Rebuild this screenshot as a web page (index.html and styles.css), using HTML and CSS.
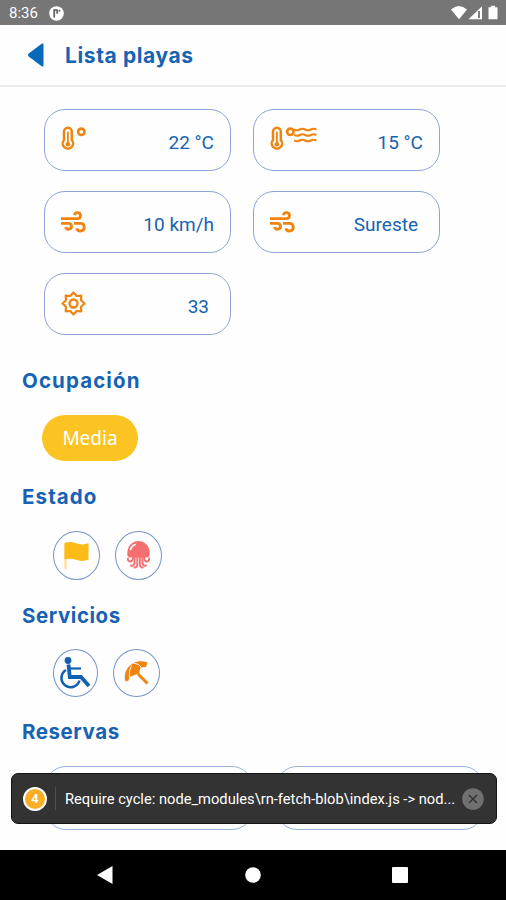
FILE: index.html
```
<!DOCTYPE html>
<html lang="es">
  <head>
    <meta charset="UTF-8" />
    <meta name="viewport" content="width=device-width, initial-scale=1.0" />
    <title>Lista playas</title>
    <link rel="stylesheet" href="styles.css">
  </head>
  <body>
    <svg class="sprite" width="0" height="0">
      <symbol id="thermo" viewBox="0 0 25 26">
        <path d="M3 14V5.600a3.900 3.900 0 0 1 7.800 0V14a5.200 5.200 0 1 1-7.800 0z" fill="none" stroke="currentColor" stroke-width="2.500" />
        <path d="M6.900 6.500v12" stroke="currentColor" stroke-width="1.800" stroke-linecap="round" />
        <circle cx="6.900" cy="18.200" r="2.300" fill="currentColor" />
        <circle cx="20.300" cy="5.800" r="3.200" fill="none" stroke="currentColor" stroke-width="2.600" />
      </symbol>
      <symbol id="wind" viewBox="0 0 25 22">
        <g fill="none" stroke="currentColor" stroke-width="2.900">
          <path d="M0 7.600h16.500a3 3 0 1 0-3-3.400" />
          <path d="M0 12.400h7.500a2.900 2.900 0 1 1-2.800 3.600" />
          <path d="M13 12.400h6.500a3.800 3.800 0 1 1-3.700 4.900" />
        </g>
      </symbol>
    </svg>

    <header class="status">
      <span class="time">8:36</span>
      <svg class="app-dot" width="15" height="15" viewBox="0 0 15 15">
        <circle cx="7.5" cy="7.5" r="7.3" fill="#fff" />
        <path d="M5.200 11.500V4.200h3v3.500" fill="none" stroke="#666" stroke-width="1.800" />
        <circle cx="10.500" cy="4.800" r="1" fill="#666" />
      </svg>
      <svg class="signals" width="48" height="16" viewBox="0 0 48 16">
        <path d="M0 4.5Q8-2.5 16 4.5L8 14.2z" fill="#fff" />
        <path d="M17.5 14.2 31 1.2v13z" fill="#fff" />
        <path d="M28 6v7" stroke="#555" stroke-width="1.5" />
        <path d="M37.5 2.2h2.400V.8h4.200v1.400h2.400v12h-9z" fill="#fff" />
      </svg>
    </header>

    <nav class="topbar">
      <svg class="back" width="16" height="24" viewBox="0 0 16 24">
        <path d="M0 12Q0 11 1 10.3L14 .6Q15.5 0 15.5 1.5v21q0 1.5-1.5.9L1 13.7Q0 13 0 12z" />
      </svg>
      <h1>Lista playas</h1>
    </nav>

    <main>
      <section class="weather">
        <div class="card">
          <svg width="25" height="26"><use href="#thermo" /></svg>
          <span>22 °C</span>
        </div>
        <div class="card">
          <div class="water">
            <svg width="25" height="26"><use href="#thermo" /></svg>
            <svg class="waves" width="23" height="16" viewBox="0 0 23 16">
              <g fill="none" stroke="currentColor" stroke-width="2">
                <path d="M0 2.500q2.800 1.500 5.600 0t5.600 0 5.600 0 5.600 0" />
                <path d="M0 8q2.800 1.500 5.600 0t5.600 0 5.600 0 5.600 0" />
                <path d="M0 13.500q2.800 1.500 5.600 0t5.600 0 5.600 0 5.600 0" />
              </g>
            </svg>
          </div>
          <span>15 °C</span>
        </div>
        <div class="card wind">
          <svg width="25" height="22"><use href="#wind" /></svg>
          <span>10 km/h</span>
        </div>
        <div class="card wind direction">
          <svg width="25" height="22"><use href="#wind" /></svg>
          <span>Sureste</span>
        </div>
        <div class="card uv">
          <svg width="25" height="25" viewBox="0 0 25 25">
            <path d="M12.5 1.5 15.7 5l4.6-.3-.3 4.6 3.5 3.2-3.500 3.200.3 4.600-4.600-.3-3.200 3.500L9.300 20l-4.600.3.3-4.600-3.500-3.200L5 9.300l-.3-4.600 4.600.3z" fill="none" stroke="currentColor" stroke-width="2.200" stroke-linejoin="round" />
            <circle cx="12.500" cy="12.500" r="4" fill="none" stroke="currentColor" stroke-width="2.400" />
          </svg>
          <span>33</span>
        </div>
      </section>

      <section class="occupation">
        <h2 class="wide">Ocupación</h2>
        <span class="pill">Media</span>
      </section>

      <section class="state">
        <h2 class="wide">Estado</h2>
        <div class="circles">
          <div class="circle">
            <svg width="47" height="49" viewBox="0 0 47 49">
              <path d="M12.500 14v24" stroke="#ffdc9c" stroke-width="2.400" />
              <path d="M11.500 12q5-2 11.500.3t12.500 0v16.500q-6 2.200-11.500.2t-12.500-.8z" fill="#fdbb17" />
            </svg>
          </div>
          <div class="circle">
            <svg width="47" height="49" viewBox="0 0 47 49">
              <path d="M12.300 23.500C11.500 5.500 35.500 5.500 34.700 23.500Q34.500 26.500 31 26.500H16Q12.500 26.500 12.300 23.500z" fill="#f46f70" />
              <g fill="none" stroke="#f46f70" stroke-width="1.900" stroke-linecap="round">
                <path d="M18 26q-.5 5-3 4.500t-2-3" />
                <path d="M29 26q.5 5 3 4.500t2-3" />
                <path d="M19.500 26v6q-.5 3.500-3.500 2.500" />
                <path d="M27.500 26v6q.5 3.500 3.500 2.500" />
                <path d="M22.300 26v8q-.3 2.500-2.800 2.500" />
                <path d="M24.900 26v8q.3 2.500 2.800 2.500" />
              </g>
              <path d="M15.500 18.500q1-3.500 4.500-5" fill="none" stroke="#fff" stroke-width="1.600" stroke-linecap="round" />
            </svg>
          </div>
        </div>
      </section>

      <section class="services">
        <h2>Servicios</h2>
        <div class="circles">
          <div class="circle narrow">
            <svg width="45" height="48" viewBox="0 0 45 48">
              <circle cx="15" cy="11.500" r="3.400" fill="#1260b0" />
              <g fill="none" stroke="#1260b0">
                <path d="M15.500 15.500 16.800 28h11.200l8 9" stroke-width="3.800" />
                <path d="M17 19.500h11" stroke-width="2.200" />
                <path d="M13 21a9.200 9.200 0 1 0 13.500 10.500" stroke-width="2.600" />
              </g>
            </svg>
          </div>
          <div class="circle">
            <svg width="47" height="48" viewBox="0 0 47 48">
              <path d="M12.500 32.500C9 20.500 20.500 8.500 34.500 13.500L33 18 27.500 18.500 26 24.500 20.500 26.500 16.500 28 15.500 31.500z" fill="#f08410" />
              <path d="M16.300 28q-.5-6.500 2.200-11.500M20 14q6 .5 8 4" fill="none" stroke="#fff" stroke-width=".9" />
              <path d="m25 25 9.500 9.500" stroke="#f08410" stroke-width="3" />
            </svg>
          </div>
        </div>
      </section>

      <section class="bookings">
        <h2>Reservas</h2>
        <div class="slots">
          <div class="slot"></div>
          <div class="slot"></div>
        </div>
      </section>
    </main>

    <div class="toast">
      <span class="count">4</span>
      <span class="message">Require cycle: node_modules\rn-fetch-blob\index.js -&gt; nod...</span>
      <svg class="close" width="22" height="22" viewBox="0 0 22 22">
        <circle cx="11" cy="11" r="10.800" fill="#707070" />
        <path d="m7 7 8 8M15 7l-8 8" stroke="#303030" stroke-width="1.300" />
      </svg>
    </div>

    <footer class="android-nav">
      <svg width="16" height="18" viewBox="0 0 16 18"><path d="M0 9 15.500 0v18z" /></svg>
      <svg width="16" height="16" viewBox="0 0 16 16"><circle cx="8" cy="8" r="7.800" /></svg>
      <svg width="16" height="16" viewBox="0 0 16 16"><rect width="16" height="16" rx="1" /></svg>
    </footer>
  </body>
</html>
```
FILE: styles.css
```
* {
  box-sizing: border-box;
}
body {
  display: flex;
  flex-direction: column;
  height: 900px;
  margin: 0;
  overflow: hidden;
  position: relative;
  background-color: #fefefe;
  color: #1763b3;
  font-family: Roboto, sans-serif;
}
svg {
  display: block;
  flex: none;
}
.sprite {
  position: absolute;
}
.status {
  display: flex;
  align-items: center;
  height: 25px;
  padding: 1px 7px 0 9px;
  background-color: #767676;
  color: white;
}
.time {
  width: 40px;
  font-size: 15px;
}
.signals {
  margin-left: auto;
}
.topbar {
  display: flex;
  align-items: center;
  height: 62px;
  padding-left: 28px;
  gap: 21px;
  border-bottom: 2px solid #ebebeb;
}
.back {
  fill: #0869ba;
}
h1,
h2 {
  margin: 0;
  font-family: Inter, sans-serif;
  font-weight: 700;
  line-height: 26px;
  white-space: nowrap;
}
h1 {
  padding-top: 2px;
  font-size: 21px;
  letter-spacing: 0.6px;
}
h2 {
  padding-left: 22px;
  font-size: 20.5px;
  letter-spacing: 0.55px;
}
.wide {
  letter-spacing: 1.1px;
}
main {
  height: 763px;
  overflow: hidden;
}
.weather {
  display: grid;
  grid-template-columns: 187px 187px;
  column-gap: 22px;
  row-gap: 20px;
  padding: 22px 0 0 44px;
}
.card {
  display: flex;
  justify-content: space-between;
  height: 62px;
  padding: 16px 16px 0 16px;
  border: 1.5px solid #8ea4d6;
  border-radius: 21px;
  color: #f08410;
}
.card span {
  margin-top: 5px;
  color: #1763b3;
  font-size: 19px;
  line-height: 23px;
}
.wind svg {
  margin-top: 3px;
}
.direction {
  padding-right: 21px;
}
.uv {
  padding-right: 21px;
}
.uv svg {
  margin-top: 1px;
}
.water {
  display: flex;
}
.waves {
  margin-top: 1px;
  margin-left: -1px;
}
.occupation {
  margin-top: 33px;
}
.pill {
  display: block;
  width: 96px;
  height: 46px;
  margin: 21px 0 0 42px;
  border-radius: 23px;
  background-color: #fcc422;
  color: white;
  font-family: "Noto Sans", sans-serif;
  font-size: 19px;
  line-height: 46px;
  text-align: center;
}
.state {
  margin-top: 23px;
}
.circles {
  display: flex;
  gap: 15px;
  padding: 21px 0 0 53px;
}
.circle {
  width: 47px;
  height: 49px;
  outline: 1.3px solid #7994cb;
  outline-offset: -1px;
  border-radius: 50%;
}
.services {
  margin-top: 23px;
}
.services .circles {
  padding-top: 20px;
}
.services .circle {
  height: 48px;
}
.services .narrow {
  width: 45px;
}
.bookings {
  margin-top: 22px;
}
.slots {
  display: flex;
  gap: 23px;
  padding: 21px 0 0 45px;
}
.slot {
  width: 208px;
  height: 64px;
  border: 1.5px solid #9bb2dc;
  border-radius: 21px;
}
.toast {
  position: absolute;
  top: 773px;
  left: 11px;
  display: flex;
  align-items: center;
  width: 486px;
  height: 51px;
  padding: 0 12px 0 11px;
  border: 1px solid #151515;
  border-radius: 7px;
  background-color: #333;
  color: white;
}
.count {
  width: 24px;
  height: 24px;
  border: 2px solid white;
  border-radius: 50%;
  background-color: #f8ae25;
  font-size: 13px;
  font-weight: 700;
  line-height: 20px;
  text-align: center;
}
.message {
  margin-left: 8px;
  padding-top: 2px;
  padding-left: 9px;
  border-left: 1px solid #505050;
  font-size: 14.7px;
  line-height: 21px;
  white-space: nowrap;
}
.close {
  margin-left: auto;
}
.android-nav {
  display: flex;
  align-items: center;
  justify-content: space-between;
  height: 50px;
  padding: 0 98px 0 97px;
  background-color: black;
  fill: white;
}
```
